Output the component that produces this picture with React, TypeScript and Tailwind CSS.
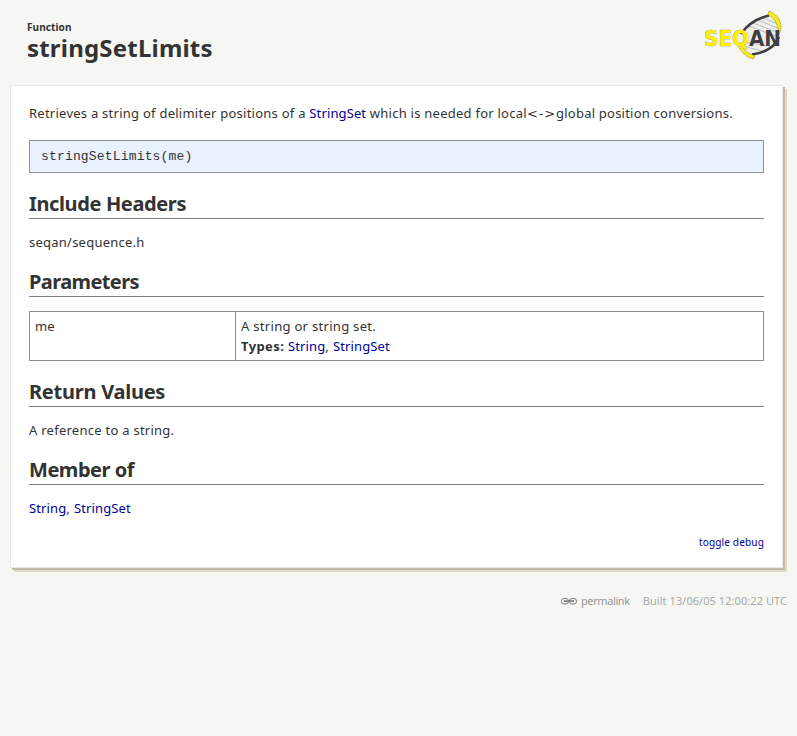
import type { ReactNode } from "react";

function Link({ children }: { children: ReactNode }) {
  return <a href="#" className="tracking-[0.12px] text-[#000099]">{children}</a>;
}

function Heading({ children, className }: { children: ReactNode; className: string }) {
  return (
    <h2 className={`h-[30px] border-b border-[#808080] text-[20px] leading-[29px] font-bold whitespace-nowrap ${className}`}>
      {children}
    </h2>
  );
}

function Logo() {
  return (
    <svg width="78" height="50" viewBox="0 0 78 50" className="mt-[10px] mr-[14px]" aria-label="SeqAn">
      <path d="M37 24L46 13L63 6L74 14L74 27L68 37L58 42L47 45L38 37Z" fill="#efefed" />
      <g stroke="#b0b0b0" strokeWidth="0.8">
        <path d="M58 8L75 15M53 10L75 19M48 13L72 22M44 16L70 26M40 32L70 37M38 36L60 42" />
      </g>
      <path d="M36 24C42 15 50 9 64 5.500" fill="none" stroke="#403e41" strokeWidth="2.600" />
      <path d="M74 27C70 36 63 42 47 44.500" fill="none" stroke="#403e41" strokeWidth="2.600" />
      <path d="M64 1C70 3 76 9 76 17C76 20 75 23 73.500 25C74 17 71 9 63 4.500Z" fill="#fff000" stroke="#8f8f55" strokeWidth="0.6" />
      <path d="M36 34C37 39 42 43 50 46L48 49C41 47 35 41 33 35Z" fill="#fff000" stroke="#8f8f55" strokeWidth="0.6" />
      <text x="-1" y="36" fontFamily="DejaVu Sans, sans-serif" fontWeight="700" fontSize="21" textLength="45" lengthAdjust="spacingAndGlyphs" fill="#fff000" stroke="#8f8f55" strokeWidth="0.6" paintOrder="stroke">SEQ</text>
      <text x="44" y="36" fontFamily="DejaVu Sans, sans-serif" fontWeight="700" fontSize="21" textLength="32" lengthAdjust="spacingAndGlyphs" fill="#403e41">AN</text>
    </svg>
  );
}

function ChainIcon() {
  return (
    <svg width="16" height="8" viewBox="0 0 16 8" fill="none" className="mr-1" aria-hidden="true">
      <rect x="0.500" y="1.500" width="7" height="5.500" rx="2.500" stroke="#777" />
      <rect x="8.500" y="1.500" width="7" height="5.500" rx="2.500" stroke="#777" />
      <path d="M3 4.200H13" stroke="#555" strokeWidth="1.600" />
      <path d="M4 4.200H12" stroke="#ddd" strokeWidth="0.500" />
    </svg>
  );
}

export default function App() {
  return (
    <div className="h-[736px] w-[797px] overflow-hidden bg-[#f6f7f2] font-['Noto_Sans',sans-serif] text-[13px] text-[#333]">
      <header className="flex h-[85px] justify-between pl-[27px]">
        <div className="pt-[20px] font-bold whitespace-nowrap">
          <div className="h-[14px] text-[10px] leading-[14px] tracking-[0.1px]">Function</div>
          <h1 className="text-[24px] leading-[28px] tracking-[0.2px]">stringSetLimits</h1>
        </div>
        <Logo />
      </header>
      <main className="ml-[10px] h-[483px] w-[773px] border border-[#e8e8e4] bg-white pt-[17px] pr-[18px] pl-[18px] shadow-[2px_2px_0_#c4baa5,4px_4px_0_#ded9ca]">
        <p className="h-[20px] leading-[20px] tracking-[0.25px] whitespace-nowrap">
          Retrieves a string of delimiter positions of a <Link>StringSet</Link> which is needed for local<span className="font-['DejaVu_Sans'] tracking-[0.9px]">&lt;-&gt;</span><span className="tracking-[0.22px]">global position conversions.</span>
        </p>
        <pre className="mt-[17px] h-[33px] border border-[#909098] bg-[#ebf2ff] pl-[11px] font-['Liberation_Mono',monospace] text-[13px] leading-[31px] tracking-[0.17px]">stringSetLimits(me)</pre>
        <Heading className="mt-[16px] tracking-[-0.37px]">Include Headers</Heading>
        <p className="mt-[13px] leading-[20px] tracking-[0.24px]">seqan/sequence.h</p>
        <Heading className="mt-[15px] tracking-[-0.6px]">Parameters</Heading>
        <div className="mt-[14px] flex h-[50px] border border-[#909090] leading-[20px]">
          <div className="w-[206px] border-r border-[#909090] pt-[4px] pl-[5px]">me</div>
          <div className="pt-[4px] pl-[5px]">
            <p className="tracking-[0.3px]">A string or string set.</p>
            <p className="tracking-[0.4px]"><b className="tracking-[0.4px]">Types:</b> <Link>String</Link>, <Link>StringSet</Link></p>
          </div>
        </div>
        <Heading className="mt-[16px] tracking-[-0.25px]">Return Values</Heading>
        <p className="mt-[13px] leading-[20px] tracking-[0.26px]">A reference to a string.</p>
        <Heading className="mt-[15px] tracking-[-0.47px]">Member of</Heading>
        <p className="mt-[13px] leading-[20px] tracking-[0.4px]"><Link>String</Link>, <Link>StringSet</Link></p>
        <div className="mt-[14px] text-right text-[10.100px] leading-[20px]"><Link>toggle debug</Link></div>
      </main>
      <footer className="mt-[23px] mr-[10px] flex h-[20px] items-center justify-end text-[11px] leading-[20px] text-[#aaa] whitespace-nowrap">
        <ChainIcon />
        <a href="#" className="mr-[13px] tracking-[-0.4px] text-[#999]">permalink</a>
        <span className="tracking-[0.06px]">Built 13/06/05 12:00:22 UTC</span>
      </footer>
    </div>
  );
}
